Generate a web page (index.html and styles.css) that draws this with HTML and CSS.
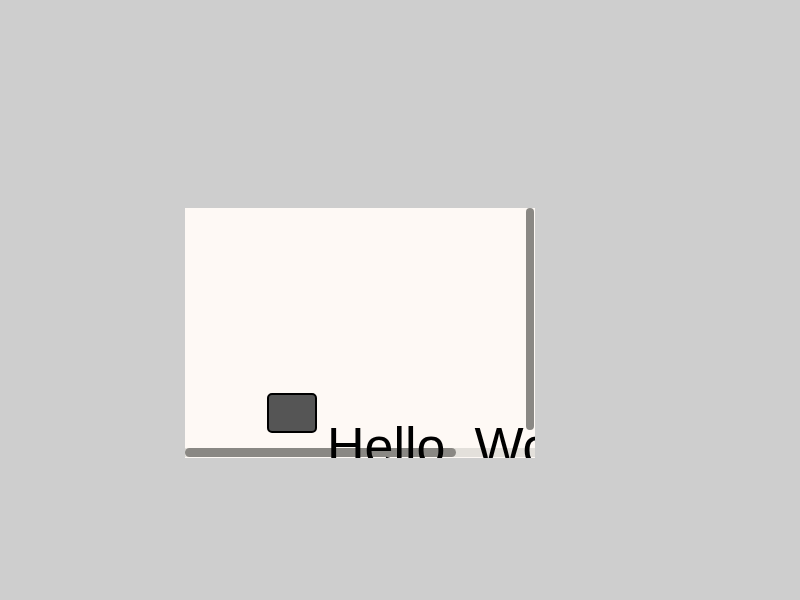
FILE: index.html
```html
<!DOCTYPE html>
<html>
<head>
<meta charset="utf-8">
<link rel="stylesheet" href="styles.css">
</head>
<body>
<div class="stage">
  <div class="view">
    <div class="content">
      <div class="chip"></div>
      <div class="label">Hello, World</div>
    </div>
    <div class="hscroll"><div class="hthumb"></div></div>
    <div class="vthumb"></div>
  </div>
</div>
</body>
</html>
```
FILE: styles.css
```css
html, body {
  margin: 0;
  padding: 0;
  background: #cecece;
  width: 800px;
  height: 600px;
  overflow: hidden;
}
.stage {
  padding: 208px 0 0 185px;
}
.view {
  position: relative;
  width: 350px;
  height: 250px;
  background: #fef9f5;
  overflow: hidden;
}
.content {
  display: flex;
  align-items: flex-start;
  padding: 185px 0 0 82px;
}
.chip {
  flex: none;
  width: 46px;
  height: 36px;
  border: 2px solid #000;
  border-radius: 5px;
  background: #555555;
}
.label {
  position: relative;
  z-index: 2;
  margin: 23px 0 0 10px;
  font-family: "Liberation Sans", Arial, sans-serif;
  font-size: 52px;
  line-height: 60px;
  color: #000;
  white-space: nowrap;
}
.hscroll {
  position: absolute;
  left: 0;
  right: 0;
  bottom: 1px;
  height: 9px;
  background: #e3e0db;
  z-index: 1;
}
.hthumb {
  width: 271px;
  height: 9px;
  border-radius: 5px;
  background: #8a8884;
}
.vthumb {
  position: absolute;
  top: 0;
  right: 1px;
  width: 8px;
  height: 222px;
  border-radius: 4px;
  background: #8a8884;
  z-index: 1;
}
```
